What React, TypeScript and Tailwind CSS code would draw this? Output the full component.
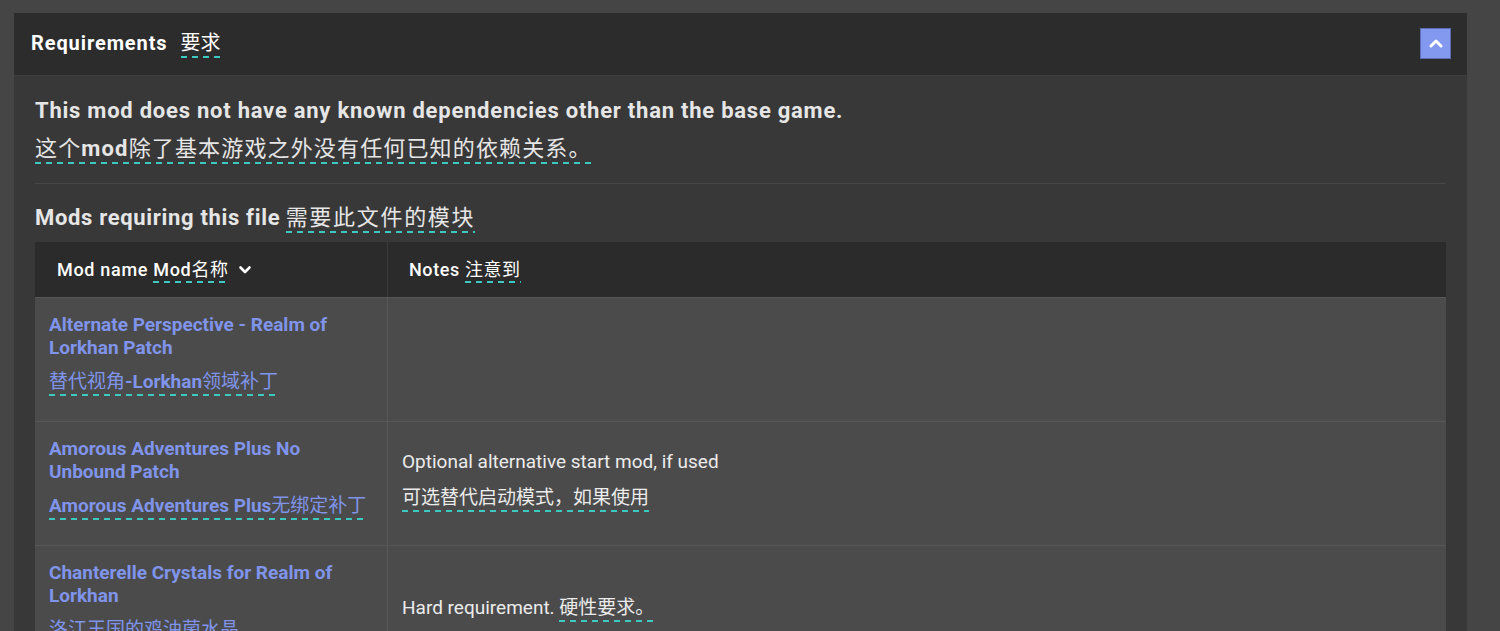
import React from "react";

const FONT = "font-['Roboto','Noto_Sans_CJK_SC',sans-serif]";
const UL =
  "pb-[3px] bg-[repeating-linear-gradient(to_right,#3ec8c2_0_6px,transparent_6px_11px)] bg-no-repeat bg-[length:100%_2px] bg-bottom";

function ChevronUp() {
  return (
    <svg width="14" height="10" viewBox="0 0 14 10" fill="none">
      <path d="M2 8L7 3L12 8" stroke="#ffffff" strokeWidth="3" strokeLinecap="round" strokeLinejoin="round" />
    </svg>
  );
}

function ChevronDown() {
  return (
    <svg width="14" height="10" viewBox="0 0 14 10" fill="none">
      <path d="M2.5 2.5L7 7L11.5 2.5" stroke="#ffffff" strokeWidth="2.6" strokeLinecap="round" strokeLinejoin="round" />
    </svg>
  );
}

type Seg = { t: string; b?: boolean };

const rows: { name: string; zh: Seg[]; notes?: React.ReactNode }[] = [
  {
    name: "Alternate Perspective - Realm of Lorkhan Patch",
    zh: [{ t: "替代视角" }, { t: "-Lorkhan", b: true }, { t: "领域补丁" }],
  },
  {
    name: "Amorous Adventures Plus No Unbound Patch",
    zh: [{ t: "Amorous Adventures Plus", b: true }, { t: "无绑定补丁" }],
    notes: (
      <div className="mt-[4px]">
        <div>Optional alternative start mod, if used</div>
        <div className="mt-[12px]">
          <span className={UL}>可选替代启动模式，如果使用</span>
        </div>
      </div>
    ),
  },
  {
    name: "Chanterelle Crystals for Realm of Lorkhan",
    zh: [{ t: "洛江王国的鸡油菌水晶" }],
    notes: (
      <div className="mt-[12px]">
        Hard requirement. <span className={UL}>硬性要求。</span>
      </div>
    ),
  },
];

export default function App() {
  return (
    <div className={`${FONT} w-[1500px] h-[631px] overflow-hidden bg-[#454545] pt-[13px] pl-[14px]`}>
      <div className="w-[1453px]">
        {/* header */}
        <div className="h-[63px] bg-[#2c2c2c] border-b border-[#3f3f3f] flex items-center justify-between pl-[17px] pr-[16px]">
          <div className="text-[20px] leading-[28px] text-white -mt-[2px]">
            <span className="font-bold tracking-[0.9px]">Requirements</span>
            <span className="ml-[13px] font-normal">
              <span className={UL}>要求</span>
            </span>
          </div>
          <button className="w-[31px] h-[31px] bg-[#8399ef] border border-[#5d6db3] flex items-center justify-center -mt-[2px]">
            <ChevronUp />
          </button>
        </div>

        {/* body */}
        <div className="bg-[#383838] px-[21px] pt-[21px] pb-[40px]">
          <div className="text-[22px] leading-[28px] text-[#e6e6e6] font-bold tracking-[0.76px]">
            This mod does not have any known dependencies other than the base game.
          </div>
          <div className="mt-[10px] text-[22px] leading-[28px] text-[#e6e6e6] tracking-[1.15px]">
            <span className={UL}>
              <span className="font-normal">这个</span>
              <span className="font-bold">mod</span>
              <span className="font-normal">除了基本游戏之外没有任何已知的依赖关系。</span>
            </span>
          </div>

          <div className="mt-[20px] h-px bg-[#474747]" />

          <div className="mt-[20px] text-[22px] leading-[28px] text-[#e6e6e6]">
            <span className="font-bold tracking-[0.67px]">Mods requiring this file</span>{" "}
            <span className={`${UL} font-normal tracking-[1.7px]`}>需要此文件的模块</span>
          </div>

          {/* table */}
          <div className="mt-[10px] grid grid-cols-[353px_1fr]">
            <div className="h-[55px] bg-[#2b2b2b] border-r border-[#3c3c3c] flex items-center pl-[22px] text-[18px] text-white font-medium tracking-[0.7px]">
              <span>Mod name</span>
              <span className="ml-[5px]">
                <span className={UL}>
                  Mod<span className="font-normal">名称</span>
                </span>
              </span>
              <span className="ml-[9px] mt-[1px]">
                <ChevronDown />
              </span>
            </div>
            <div className="h-[55px] bg-[#2b2b2b] flex items-center pl-[21px] text-[18px] text-white font-medium tracking-[0.6px]">
              <span>Notes</span>
              <span className="ml-[5px]">
                <span className={`${UL} font-normal`}>注意到</span>
              </span>
            </div>

            {rows.map((r, i) => (
              <React.Fragment key={i}>
                <div className="bg-[#4b4b4b] border-t border-r border-[#575757] pl-[14px] pr-[14px] pt-[15px] pb-[27px] text-[19px] leading-[24px] text-[#7f94ea] font-bold">
                  <div className="leading-[23px]">{r.name}</div>
                  <div className="mt-[11px]">
                    <span className={UL}>
                      {r.zh.map((s, j) => (
                        <span key={j} className={s.b ? "font-bold" : "font-normal"}>
                          {s.t}
                        </span>
                      ))}
                    </span>
                  </div>
                </div>
                <div className="bg-[#4b4b4b] border-t border-[#575757] pl-[14px] pr-[14px] pt-[15px] pb-[27px] text-[19px] leading-[24px] text-[#ececec] flex items-center">
                  {r.notes}
                </div>
              </React.Fragment>
            ))}
          </div>
        </div>
      </div>
    </div>
  );
}
